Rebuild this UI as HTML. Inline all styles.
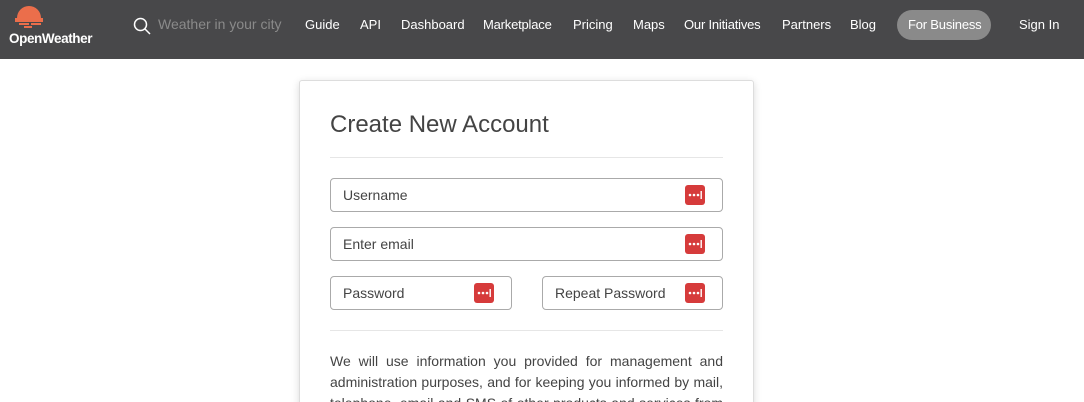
<!DOCTYPE html><html><head><style>
html,body{margin:0;width:1084px;height:402px;overflow:hidden}
body{background:#fff;font-family:"Liberation Sans",sans-serif;position:relative}
.nav{position:absolute;left:0;top:0;width:1084px;height:59px;background:#48484a;color:#fff;font-size:13px}
.nav span{position:absolute;top:17px}
.wrap{position:absolute;left:290px;top:70px;width:480px;height:332px;overflow:hidden}
.card{position:absolute;left:9px;top:10px;width:453px;height:340px;border:1px solid #ddd;border-radius:3px;box-shadow:0 2px 8px rgba(0,0,0,.15);background:#fff}
.in{position:absolute;border:1px solid #aaa;border-radius:4px;font-size:14px;color:#444;line-height:32px;padding-left:12px;box-sizing:border-box;height:34px}
.ic{position:absolute;top:6px;width:20px;height:20px}
.hr{position:absolute;left:30px;width:393px;height:1px;background:#e6e6e6}
</style></head><body>
<svg width="0" height="0" style="position:absolute"><defs><symbol id="k" viewBox="0 0 20 20"><rect width="20" height="20" rx="3" fill="#d63b3b"/><circle cx="5" cy="10" r="1.3" fill="#fff"/><circle cx="9" cy="10" r="1.3" fill="#fff"/><circle cx="13" cy="10" r="1.3" fill="#fff"/><rect x="15.5" y="6" width="1.4" height="8" fill="#fff"/></symbol></defs></svg>
<div class="nav">
<svg style="position:absolute;left:13px;top:4px" width="34" height="26" viewBox="0 0 34 26"><path d="M4 14a12 12 0 0 1 24 0z" fill="#eb6e4b"/><rect x="2" y="14" width="28" height="4" fill="#eb6e4b"/><rect x="6" y="19" width="10" height="2" fill="#eb6e4b"/><rect x="18" y="19" width="10" height="2" fill="#eb6e4b"/><rect x="11" y="22" width="8" height="2" fill="#eb6e4b"/></svg>
<span style="left:9px;top:31px;font-weight:bold;font-size:13.5px;letter-spacing:-0.4px">OpenWeather</span>
<svg style="position:absolute;left:133px;top:17px" width="18" height="18" viewBox="0 0 18 18"><circle cx="7.5" cy="7.5" r="6" fill="none" stroke="#fff" stroke-width="1.5"/><path d="M12 12l5 5" stroke="#fff" stroke-width="1.5"/></svg>
<span style="left:158px;color:#8a8a8a;font-size:14px;top:16px">Weather in your city</span>
<span style="left:305px">Guide</span><span style="left:360px">API</span><span style="left:401px">Dashboard</span><span style="left:483px;letter-spacing:-0.2px">Marketplace</span><span style="left:573px">Pricing</span><span style="left:633px">Maps</span><span style="left:684px;letter-spacing:-0.2px">Our Initiatives</span><span style="left:782px">Partners</span><span style="left:850px">Blog</span>
<div style="position:absolute;left:897px;top:10px;width:94px;height:30px;border-radius:15px;background:#8a8a8a"></div><span style="left:908px;letter-spacing:-0.2px">For Business</span>
<span style="left:1019px">Sign In</span>
</div>
<div class="wrap"><div class="card">
<div style="position:absolute;left:30px;top:30px;font-size:24px;color:#444">Create New Account</div>
<div class="hr" style="top:76px"></div>
<div class="in" style="left:30px;top:97px;width:393px">Username<svg class="ic" style="left:354px"><use href="#k"/></svg></div>
<div class="in" style="left:30px;top:146px;width:393px">Enter email<svg class="ic" style="left:354px"><use href="#k"/></svg></div>
<div class="in" style="left:30px;top:195px;width:182px">Password<svg class="ic" style="left:143px"><use href="#k"/></svg></div>
<div class="in" style="left:242px;top:195px;width:181px">Repeat Password<svg class="ic" style="left:142px"><use href="#k"/></svg></div>
<div class="hr" style="top:249px"></div>
<div style="position:absolute;left:30px;top:270px;width:393px;font-size:14px;line-height:21px;color:#444;text-align:justify">We will use information you provided for management and administration purposes, and for keeping you informed by mail, telephone, email and SMS of other products and services from us and our partners.</div>
</div></div>
</body></html>
